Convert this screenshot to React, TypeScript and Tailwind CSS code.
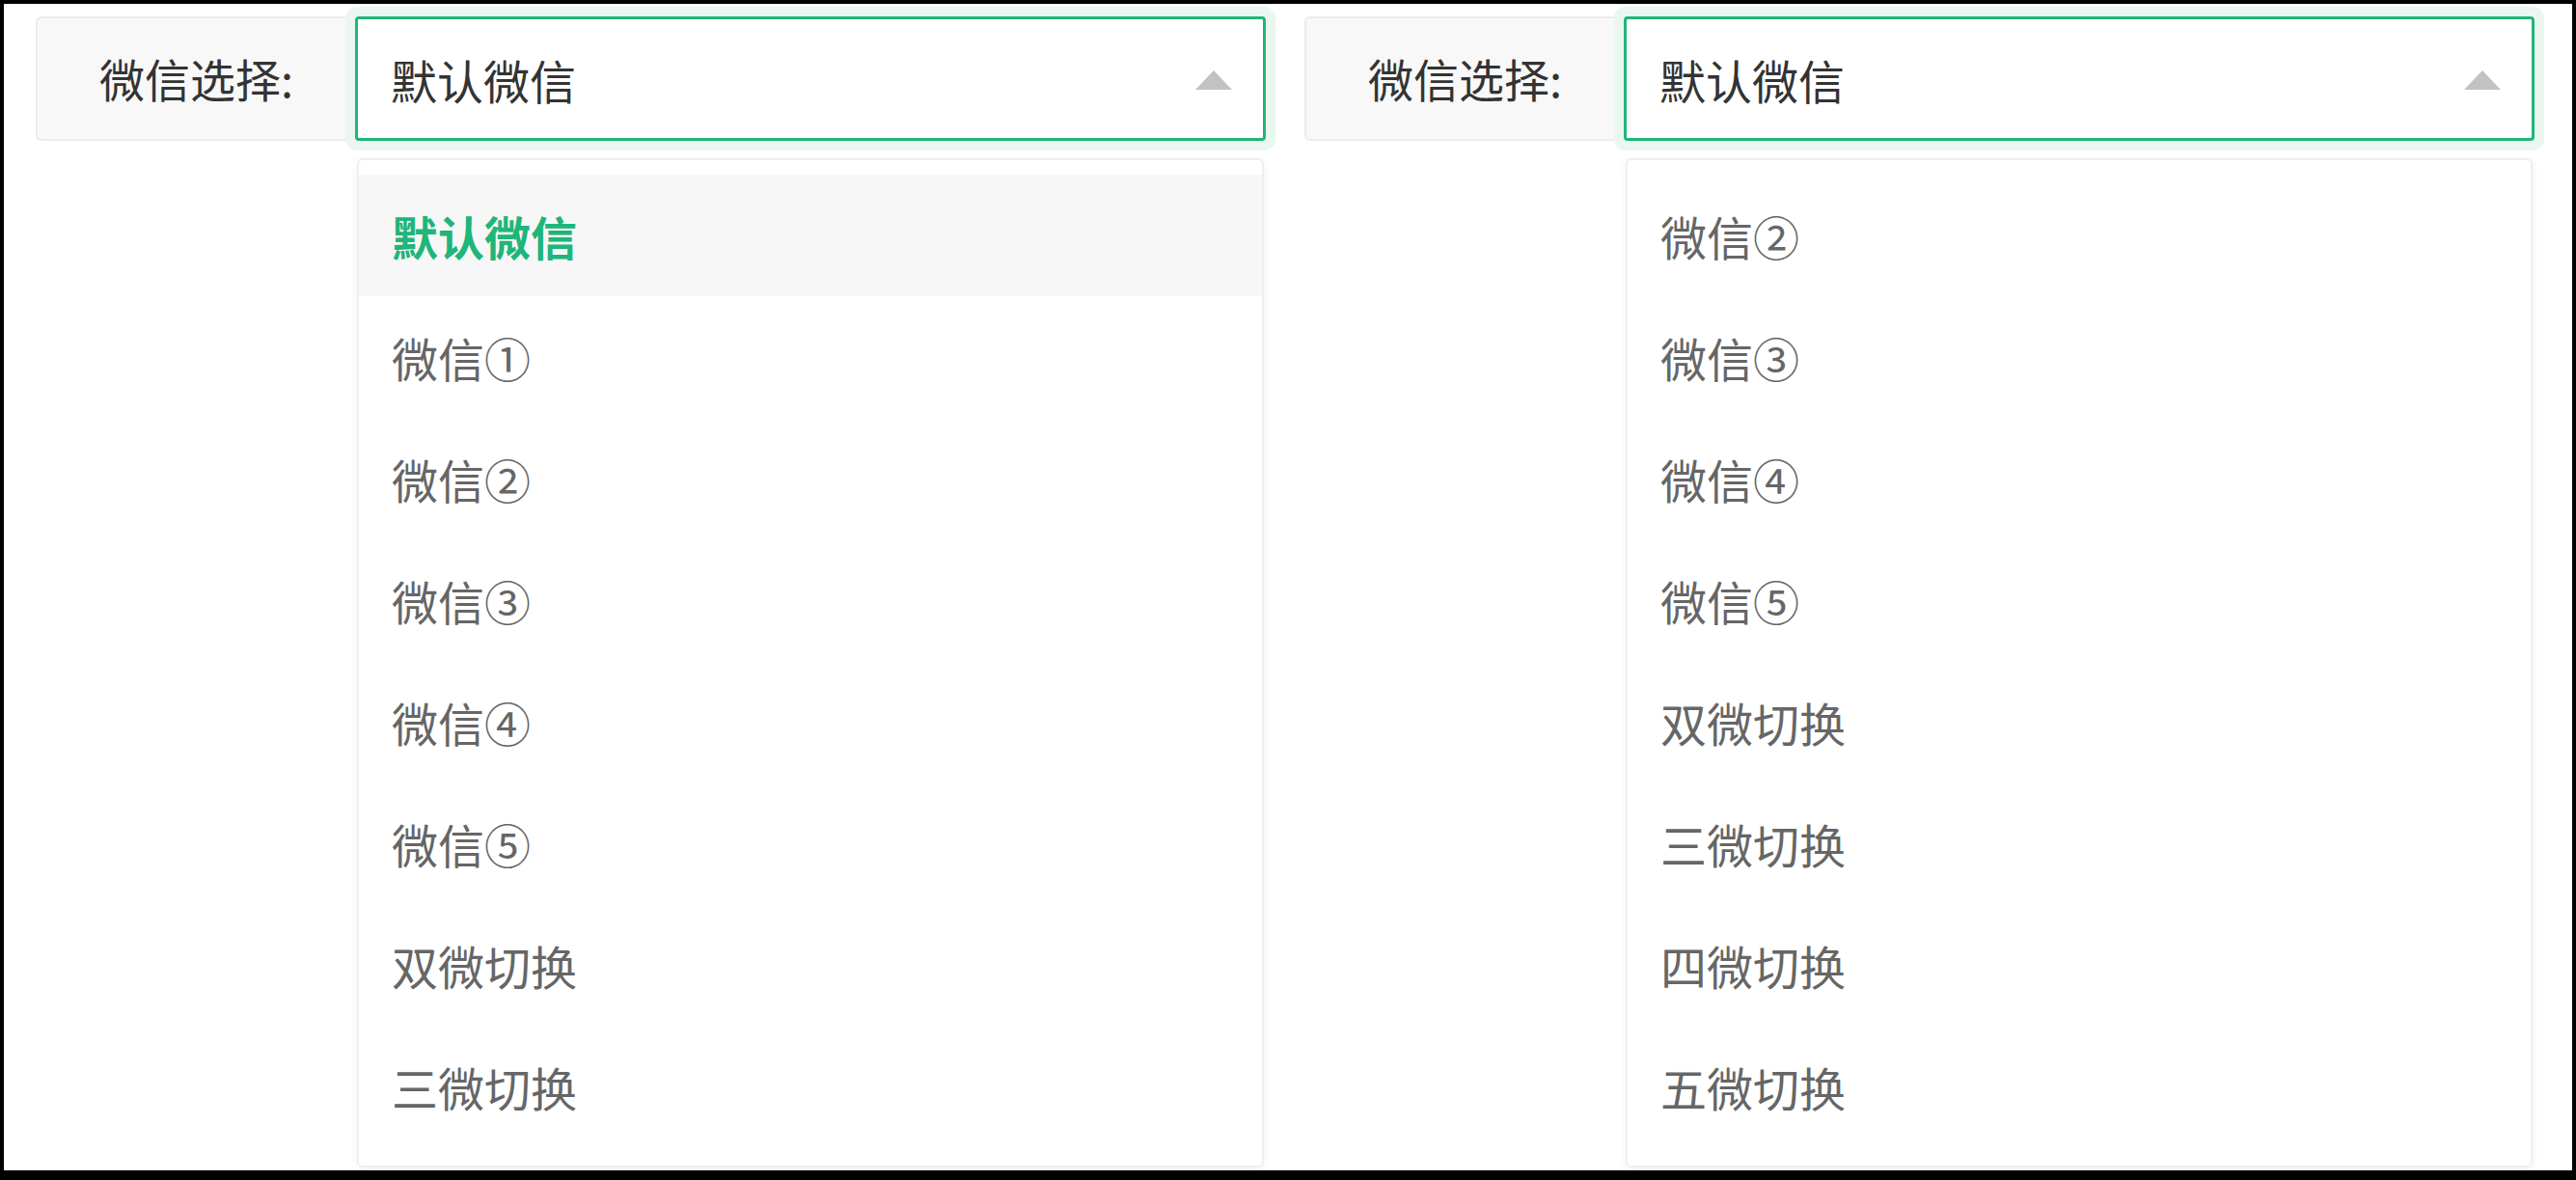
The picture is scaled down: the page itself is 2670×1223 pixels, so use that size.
import React from 'react';

const LEFT = ['默认微信', '微信①', '微信②', '微信③', '微信④', '微信⑤', '双微切换', '三微切换'];
const RIGHT = ['微信②', '微信③', '微信④', '微信⑤', '双微切换', '三微切换', '四微切换', '五微切换'];

const Panel: React.FC<{ items: string[]; activeIndex: number }> = ({ items, activeIndex }) => (
    <div className="w-[1275px] shrink-0 flex flex-col">
        <div className="flex h-[129px]">
            <div className="w-[331px] shrink-0 bg-[#f8f8f8] border-2 border-[#ececec] border-r-0 rounded-l-[6px] flex items-center justify-center text-[47px] text-[#333]">
                微信选择:
            </div>
            <div className="relative w-[944px] shrink-0 bg-white border-[3px] border-[#20b57a] rounded-[4px] shadow-[0_0_0_10px_#eaf7f1] flex items-center pl-[34px] text-[48px] text-[#333]">
                默认微信
                <svg className="absolute right-[32px] top-[53px]" width="38" height="20" viewBox="0 0 38 20">
                    <polygon points="19,0 38,20 0,20" fill="#c2c2c2" />
                </svg>
            </div>
        </div>
        <div className="ml-[333px] mt-[18px] w-[940px] bg-white border-2 border-[#efefef] rounded-[6px] shadow-[0_2px_8px_rgba(0,0,0,0.06)] pt-[15px] pb-[19px]">
            {items.map((item, i) => (
                <div
                    key={item}
                    className={`h-[126px] flex items-center pl-[34px] text-[48px] ${i === activeIndex
                        ? 'bg-[#f7f7f7] text-[#20b57a] font-bold'
                        : 'text-[#666]'
                        }`}
                >
                    {item}
                </div>
            ))}
        </div>
    </div>
);

export default function App() {
    return (
        <div
            className="w-[2670px] h-[1223px] bg-white border-4 border-b-[10px] border-black overflow-hidden flex gap-[40px] pl-[33px] pt-[13px]"
            style={{ fontFamily: '"Noto Sans CJK SC", "Noto Sans", sans-serif' }}
        >
            <Panel items={LEFT} activeIndex={0} />
            <Panel items={RIGHT} activeIndex={-1} />
        </div>
    );
}
